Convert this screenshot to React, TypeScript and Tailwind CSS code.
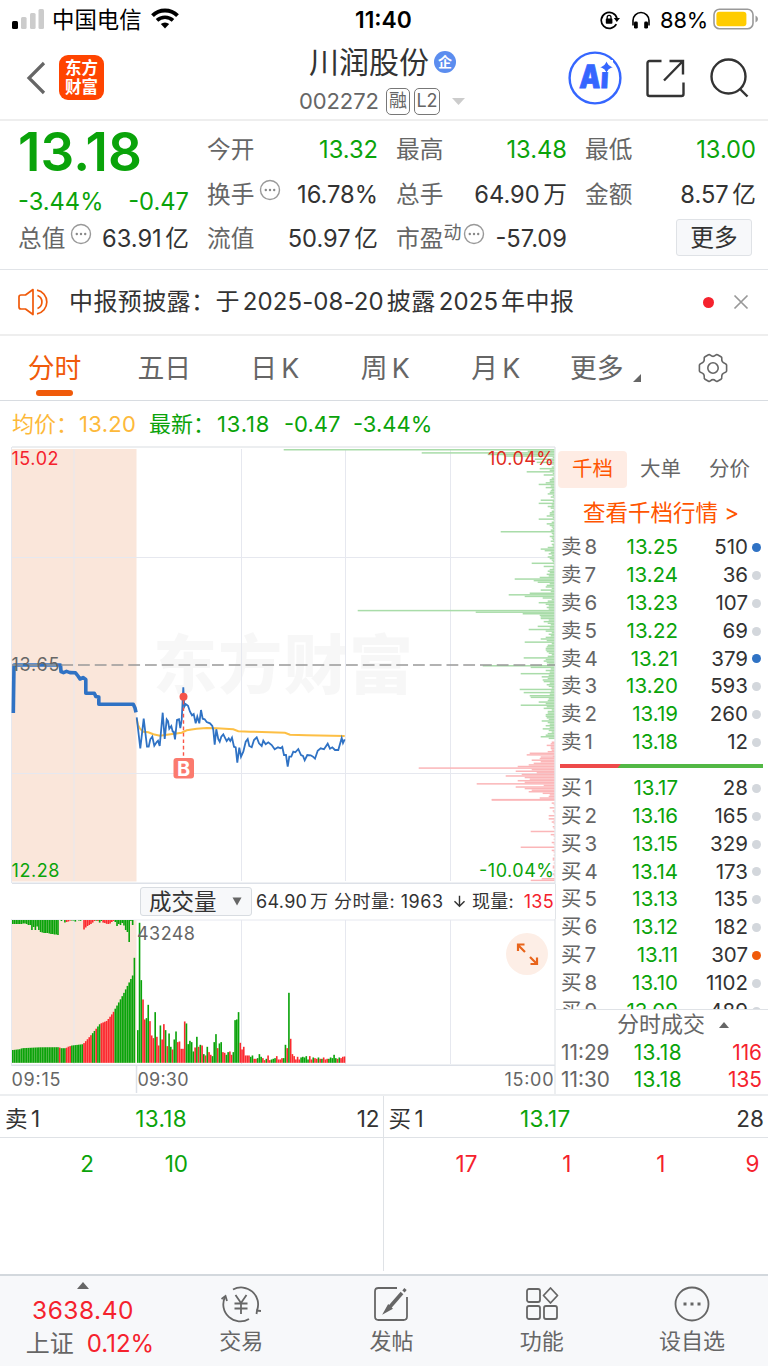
import React from 'react';
import { RiArrowDownLine } from 'react-icons/ri';

const UP = '#f5222d';
const DOWN = '#0aa30a';

// [page y, bar length] of the notable order book levels
const askLevels: [number, number][] = [
  [449.3, 271], [450.8, 27], [452.6, 133], [454, 67], [455.2, 50], [459, 20], [462, 18], [468.3, 15],
  [471.3, 28], [474.6, 11], [479.3, 5], [482.3, 9], [484, 16], [487.3, 9], [491, 4], [493.3, 7],
  [499.6, 14], [502.6, 16], [506, 7], [512, 5], [515.3, 8], [518.6, 16], [523.3, 8], [531, 54],
  [547.3, 7], [548.6, 14], [550, 10], [553.3, 6], [556.6, 7], [563, 23], [566.3, 11], [571.6, 7],
  [577, 15], [578.6, 40], [580, 21], [581.6, 17], [586.6, 9], [590, 14], [593, 25], [594.6, 46],
  [596, 30], [597.6, 12], [602.3, 16], [605.6, 6], [610.3, 197], [612, 79], [613.3, 32], [614.6, 15],
  [616.6, 14], [618.6, 14], [620.6, 11], [626, 17], [629.3, 26], [630.6, 9], [634, 6], [639, 14],
  [641.6, 30], [646, 8], [649.6, 9], [657.6, 31], [660.3, 11], [665.7, 72], [667.3, 24], [673.3, 34],
  [676.6, 13], [679.3, 12], [681.3, 11], [689, 35], [692.3, 31], [695.3, 25], [697, 24], [699.3, 6],
  [701.6, 16], [705, 34], [707.6, 11], [712.6, 7], [716.3, 9], [720.6, 13], [724, 5], [728.6, 12],
  [735.3, 9], [736.6, 14], [738, 6],
];

const bidLevels: [number, number][] = [
  [742.3, 3], [744.6, 8], [747, 4], [750.6, 7], [752.3, 25], [755.3, 28], [758.3, 15], [760, 23],
  [763.3, 21], [765, 26], [766.3, 37], [768, 136], [769.6, 23], [771.3, 39], [774.3, 33], [776, 49],
  [777.6, 30], [779.3, 25], [780.6, 37], [782.3, 30], [784, 78], [785.6, 11], [787, 39], [788.6, 30],
  [790.3, 23], [792, 26], [795, 5], [796.6, 6], [798.3, 15], [799.6, 63], [802.6, 3], [807.6, 5],
  [815.3, 6], [818.6, 6], [822, 3], [831.3, 24], [834.6, 4], [842.3, 3], [847, 34], [850.3, 3],
  [859.3, 2], [868, 2], [878.6, 13], [880, 24],
];

const TICK = 1.577;

// Every tick gets a bar, small ones come from a fixed pattern
function buildDepth(levels: [number, number][], from: number, to: number, filler: number[]) {
  const bars: { y: number; w: number }[] = [];
  for (let i = 0, y = from; y < to; i++, y += TICK) {
    const hit = levels.filter((l) => Math.abs(l[0] - y - 0.4) <= TICK / 2);
    const w = hit.length ? Math.max(...hit.map((h) => h[1])) : filler[i % filler.length];
    bars.push({ y, w });
  }
  return bars;
}

const askBars = [
  ...buildDepth(askLevels, 449, 572, [3, 2, 4, 1, 3, 2, 5]),
  ...buildDepth(askLevels, 572, 739, [5, 8, 6, 3, 7, 4, 9]),
];
const bidBars = [
  ...buildDepth(bidLevels, 741.5, 756, [2, 4, 3]),
  ...buildDepth(bidLevels, 756.3, 799, [14, 18, 12]),
  ...buildDepth(bidLevels, 799.2, 881, [1, 0, 2, 1, 0]),
];

const preLine =
  '13.3,713 14,665 60.5,665 61,671.5 63.5,672.6 66.5,671.4 70,672.6 75.5,672.8 78,676 80,679 83,677.6 85.8,679.5 85.8,693.3 94.3,693.3 95.8,696.4 98.8,697 98.8,704.3 133.3,704.3 135,708 136,712.3';

const mainPoints = [
  410, 232, 421, 325, 431, 236, 441, 320, 446, 320, 451, 298, 457, 290, 463, 317, 470, 306, 474, 302, 479, 318,
  488, 218, 494, 297, 500, 238, 504, 243, 508, 266, 514, 258, 518, 275, 521, 275, 525, 298, 531, 240, 537, 238,
  541, 264, 545, 240, 550, 142, 553, 200, 557, 192, 564, 197, 570, 215, 576, 226, 581, 222, 587, 250, 592, 230,
  598, 250, 603, 210, 608, 236, 614, 238, 620, 246, 630, 250, 637, 258, 640, 270, 644, 314, 649, 268, 655, 298,
  659, 305, 664, 290, 670, 283, 676, 295, 680, 303, 686, 295, 691, 303, 696, 293, 702, 320, 707, 322, 712, 368,
  718, 323, 723, 350, 730, 335, 737, 305, 743, 297, 748, 318, 755, 322, 762, 300, 770, 292, 777, 310, 785, 318,
  790, 302, 797, 313, 805, 307, 815, 315, 824, 328, 834, 322, 842, 325, 847, 321, 852, 345, 858, 345, 863, 380,
  868, 350, 874, 350, 880, 335, 886, 337, 895, 327, 903, 345, 909, 348, 914, 361, 922, 345, 932, 346, 939, 350,
  945, 356, 953, 332, 962, 325, 972, 328, 983, 311, 990, 326, 997, 322, 1005, 330, 1015, 330, 1025, 294, 1029, 309,
  1034, 298,
];

const avgPoints = [
  410, 236, 414, 255, 420, 266, 430, 275, 445, 277, 460, 283, 480, 287, 500, 284, 545, 278, 560, 271, 590, 266,
  620, 264, 650, 265, 700, 268, 715, 274, 750, 275, 855, 278, 870, 284, 920, 286, 1034, 288,
];

function toPoints(flat: number[]) {
  const out: string[] = [];
  for (let i = 0; i < flat.length; i += 2) {
    out.push(`${(flat[i] / 3).toFixed(1)},${(640 + flat[i + 1] / 3).toFixed(1)}`);
  }
  return out.join(' ');
}

// Call auction: matched volume envelope [x, height]
const auctionShape: [number, number][] = [
  [12, 12.7], [20, 13.6], [22, 14.6], [40, 15.5], [59, 15.6], [61, 14.6], [66, 14.6], [68, 16], [72, 17.3],
  [83, 18.6], [87, 23], [93, 30], [100, 39], [107, 42], [113, 50], [118, 59], [123, 68], [127, 76], [130, 82],
  [133, 88], [133.6, 105], [136, 105],
];
const auctionReds: [number, number][] = [[58.6, 60.5], [65.5, 71], [83, 92], [95.6, 97.5], [101, 114.6]];

function auctionHeight(x: number) {
  for (let i = 1; i < auctionShape.length; i++) {
    const [x0, h0] = auctionShape[i - 1];
    const [x1, h1] = auctionShape[i];
    if (x <= x1) return h0 + ((h1 - h0) * (x - x0)) / (x1 - x0);
  }
  return 0;
}

const BAR_STEP = 1.737;

const auctionBars = Array.from({ length: 71 }, (_, i) => {
  const x = 12 + i * BAR_STEP;
  const red = auctionReds.some(([a, b]) => x + 0.8 >= a && x + 0.8 < b);
  return { x, h: auctionHeight(x + 0.8), red };
});

// Unmatched volume hanging from the top, depth + colour
const unmatched = (
  '4g 4g 4g 4g 4g 4g 3.5g 3.5g 4g 5g 5g 10g 7g 10g 6.5g 10g 12g 12.5g 13g 13g 13g 13.5g 14g 14g 14.5g 14.5g 15g ' +
  '0g 1g 0g 2.5g 2r 1.5r 0.6r 0.5g 0.5g 1.6g 0g 0.5g 0.8g 0g 9.5r 7.5r 6r 5r 4r 2.6r 1r 0.7g 1r 2.6g 1g 2.6r 3r 3.8r 4r ' +
  '3.5r 2r 1r 2g 6g 4g 5g 3g 5.5g 10g 12g 22g 1g 5g 0g'
).split(' ');

const volumes = (
  '98g 420g 248g 190r 130r 134g 174g 125r 82r 74r 152g 78r 52r 112g 70r 116r 98g 50r 88g 48g 40r 70g 94g 62r 64r 42r 42r ' +
  '124r 118g 56g 66g 62g 34g 46r 78g 48r 54g 52r 26g 22r 48g 32r 24r 20g 62g 86g 44r 58g 62g 32r 30r 24g 32g 34r 24r 32g ' +
  '128g 130g 152g 60r 40r 48r 22r 22r 22r 18g 22g 12r 12r 14g 26g 18g 14r 8r 12g 22r 8r 10g 12g 14g 20r 10r 10r 14r 14g 54g 44r ' +
  '210g 72r 26r 20r 10r 18r 10r 16g 18g 16g 20g 10g 20r 10r 16g 14r 12r 16g 12r 12g 16r 10r 12r 12g 16g 14g 24g ' +
  '14g 12r 16g 14r 18r 19r'
)
  .split(' ')
  .slice(0, 121);

const asks = [
  ['卖8', '13.25', '510', 'blue'], ['卖7', '13.24', '36', ''], ['卖6', '13.23', '107', ''], ['卖5', '13.22', '69', ''],
  ['卖4', '13.21', '379', 'blue'], ['卖3', '13.20', '593', ''], ['卖2', '13.19', '260', ''], ['卖1', '13.18', '12', ''],
];
const bids = [
  ['买1', '13.17', '28', ''], ['买2', '13.16', '165', ''], ['买3', '13.15', '329', ''], ['买4', '13.14', '173', ''],
  ['买5', '13.13', '135', ''], ['买6', '13.12', '182', ''], ['买7', '13.11', '307', 'orange'], ['买8', '13.10', '1102', ''],
  ['买9', '13.09', '489', ''],
];

// Small gap where Han characters meet digits or latin letters
function Spaced({ text }: { text: string }) {
  const parts = text.match(/[\u4e00-\u9fff]+|[^\u4e00-\u9fff]+/g) || [];
  return (
    <>
      {parts.map((p, i) => (
        <span key={i} className={i > 0 ? 'ml-[0.15em]' : ''}>
          {p}
        </span>
      ))}
    </>
  );
}

function InfoDot() {
  return (
    <svg width="22" height="22" viewBox="0 0 22 22" className="shrink-0">
      <circle cx="11" cy="11" r="9.5" fill="none" stroke="#999" strokeWidth="1.4" />
      <circle cx="6.8" cy="11" r="1.2" fill="#888" />
      <circle cx="11" cy="11" r="1.2" fill="#888" />
      <circle cx="15.2" cy="11" r="1.2" fill="#888" />
    </svg>
  );
}

function StatusBar() {
  return (
    <div className="flex h-10 items-center text-black">
      <svg width="32" height="20" viewBox="0 0 32 20" className="-mt-0.5 ml-3">
        <rect x="0" y="12" width="6" height="8" rx="1.5" fill="#000" />
        <rect x="9" y="8" width="5.6" height="12" rx="1.5" fill="#ccc" />
        <rect x="18" y="4" width="5.6" height="16" rx="1.5" fill="#ccc" />
        <rect x="26.5" y="0" width="5.5" height="20" rx="1.5" fill="#ccc" />
      </svg>
      <span className="ml-2 w-[89px] text-[22.4px] whitespace-nowrap">中国电信</span>
      <svg width="28" height="21" viewBox="0 0 28 21" className="-mt-1 ml-2.5">
        <path d="M1.5 7.6a18 18 0 0 1 25 0" fill="none" stroke="#000" strokeWidth="4" />
        <path d="M6 12.4a11.6 11.6 0 0 1 16 0" fill="none" stroke="#000" strokeWidth="3.6" />
        <path d="M14 20.5l-4.2-4.4a6.2 6.2 0 0 1 8.4 0z" fill="#000" />
      </svg>
      <span className="ml-[176px] w-[59px] text-[22.800px] font-semibold">11:40</span>
      <svg width="20" height="20" viewBox="0 0 20 20" className="ml-[186px]">
        <path d="M16.3 14.2A8 8 0 1 1 17 8.5" fill="none" stroke="#000" strokeWidth="1.7" />
        <path d="M13.8 8h6.2l-3.2 4z" fill="#000" />
        <rect x="5.8" y="8.6" width="6.6" height="5.2" rx="0.8" fill="#000" />
        <path d="M7.2 9V7.2a1.9 1.9 0 0 1 3.8 0V9" fill="none" stroke="#000" strokeWidth="1.3" />
      </svg>
      <svg width="20" height="19" viewBox="0 0 20 19" className="ml-[11px]">
        <path d="M2 14.5V9.5a8 8 0 0 1 16 0v5" fill="none" stroke="#000" strokeWidth="1.6" />
        <rect x="3" y="10.6" width="3.8" height="7" rx="1.4" fill="#000" />
        <rect x="13.2" y="10.6" width="3.8" height="7" rx="1.4" fill="#000" />
      </svg>
      <span className="ml-[9px] w-[48px] text-[21.800px] tracking-[-0.1px]">88%</span>
      <svg width="46" height="22" viewBox="0 0 46 22" className="-mt-0.5 ml-[5px]">
        <rect x="1" y="1.2" width="39" height="19.6" rx="5.5" fill="none" stroke="#999" strokeWidth="1.6" />
        <rect x="3.4" y="3.8" width="30" height="14.4" rx="3" fill="#fc0" />
        <path d="M42.5 7.5q2.5 1 2.5 3.5t-2.5 3.5z" fill="#999" />
      </svg>
    </div>
  );
}

function Header() {
  return (
    <header className="flex h-[81px] border-b-2 border-[#eeeeee]">
      <svg width="20" height="34" viewBox="0 0 20 34" className="mt-[21px] ml-[26px]">
        <path d="M18 2L3 17l15 15" fill="none" stroke="#666" strokeWidth="3.2" />
      </svg>
      <div className="mt-[15px] ml-[13px] flex h-[45px] w-[45px] flex-col items-center justify-center rounded-[9px] bg-[#ff4400] text-[16.5px] leading-[18.5px] font-bold text-white">
        <span>东方</span>
        <span>财富</span>
      </div>
      <div className="ml-[195px] flex w-[169px] flex-col">
        <div className="mt-[2px] flex h-10 items-center">
          <span className="ml-[10px] text-[30px] whitespace-nowrap text-[#333]">川润股份</span>
          <span className="ml-[5px] flex h-[22px] w-[22px] shrink-0 items-center justify-center rounded-full bg-[#5b8def] text-[14px] leading-none font-bold text-white">
            企
          </span>
        </div>
        <div className="mt-[5px] flex h-7 items-center text-[#666]">
          <span className="w-[83px] text-[22px] tracking-[-0.1px]">002272</span>
          <span className="ml-[4px] flex h-[27px] w-6 shrink-0 items-center justify-center rounded-[5px] border border-[#777] text-[18px] leading-none">
            融
          </span>
          <span className="ml-1 flex h-[27px] w-[26px] shrink-0 items-center justify-center rounded-[5px] border border-[#777] text-[18px] leading-none">
            L2
          </span>
          <svg width="13" height="7" viewBox="0 0 13 7" className="ml-3 shrink-0">
            <path d="M0 0h13L6.500 7z" fill="#ccc" />
          </svg>
        </div>
      </div>
      <svg width="54" height="54" viewBox="0 0 54 54" className="mt-[11px] ml-[100px]">
        <circle cx="27" cy="27" r="25.400" fill="#fff" stroke="#3566ff" strokeWidth="2.400" />
        <text
          x="13"
          y="37.500"
          transform="skewX(-3)"
          fontSize="32"
          fontWeight="900"
          fill="#3566ff"
          stroke="#3566ff"
          strokeWidth="0.800"
          textLength="29"
          lengthAdjust="spacingAndGlyphs"
        >
          Ai
        </text>
        <rect x="31" y="9" width="14" height="12" fill="#fff" />
        <path d="M38.500 12q1.200 3 4.500 4.200q-3.300 1.200-4.500 4.200q-1.200-3-4.500-4.200q3.300-1.200 4.500-4.200z" fill="#3566ff" stroke="#3566ff" strokeWidth="1.200" />
      </svg>
      <svg width="40" height="40" viewBox="0 0 40 40" fill="none" stroke="#333" strokeWidth="2.400" className="mt-[18px] ml-[23px]">
        <path d="M16.500 3H4.500a2 2 0 0 0-2 2v31a2 2 0 0 0 2 2h32a2 2 0 0 0 2-2V24.500" />
        <path d="M24.500 3h13.500v13.500M37.500 3.500L19 22.500" />
      </svg>
      <svg width="40" height="40" viewBox="0 0 40 40" fill="none" stroke="#333" strokeWidth="2.400" className="mt-[18px] ml-[24px]">
        <circle cx="19.500" cy="18.500" r="17" />
        <path d="M30.500 30.500l8 8" />
      </svg>
    </header>
  );
}

type CellProps = { label: string; value: string; green?: boolean; info?: boolean; sup?: string };

function Cell({ label, value, green, info, sup }: CellProps) {
  return (
    <div className="flex h-[44.5px] items-center justify-between whitespace-nowrap">
      <div className="flex items-center text-[#666]">
        <span>{label}</span>
        {sup && <span className="-mt-3.5 text-[18px]">{sup}</span>}
        {info && (
          <span className={sup ? '-mt-2.5 ml-0.5' : '-mt-2.5 ml-[5px]'}>
            <InfoDot />
          </span>
        )}
      </div>
      <span className={green ? 'text-[#0aa30a]' : 'text-[#333]'}>
        <Spaced text={value} />
      </span>
    </div>
  );
}

function Quote() {
  return (
    <section className="flex h-[149px] gap-[18px] border-b border-[#e1e4e8] pt-[7px] pl-[18px] text-[23.700px]">
      <div className="w-[171px]">
        <div className="h-[52px] text-[53px] leading-[49px] font-semibold tracking-[0.100px] text-[#0aa30a]">13.18</div>
        <div className="flex h-[37px] items-center justify-between pt-[6px] text-[#0aa30a]">
          <span>-3.44%</span>
          <span>-0.47</span>
        </div>
        <Cell label="总值" value="63.91亿" info />
      </div>
      <div className="w-[171px]">
        <Cell label="今开" value="13.32" green />
        <Cell label="换手" value="16.78%" info />
        <Cell label="流值" value="50.97亿" />
      </div>
      <div className="w-[171px]">
        <Cell label="最高" value="13.48" green />
        <Cell label="总手" value="64.90万" />
        <Cell label="市盈" value="-57.09" info sup="动" />
      </div>
      <div className="w-[171px]">
        <Cell label="最低" value="13.00" green />
        <Cell label="金额" value="8.57亿" />
        <button className="mt-0.5 ml-[91px] flex h-[37px] w-[76px] items-center justify-center rounded-[3px] border border-[#dfe2e6] bg-[#f7f8fa] text-[#333]">
          更多
        </button>
      </div>
    </section>
  );
}

function Notice() {
  return (
    <section className="flex h-[66px] items-center border-b-2 border-[#eeeeee] pl-[18px]">
      <svg width="32" height="28" viewBox="0 0 32 28" fill="none" stroke="#f05a0a" strokeWidth="1.700">
        <path d="M15 1.500L7.500 7H3Q1 7 1 9v10q0 2 2 2h4.500L15 26.500z" strokeLinejoin="round" />
        <path d="M19.500 7.500a7 7 0 0 1 0 13M19 2.200a12 12 0 0 1 0 23.600" />
      </svg>
      <span className="ml-[19px] w-[507px] text-[24px] tracking-[0.400px] whitespace-nowrap text-[#333]">
        中报预披露：于
        <span className="mx-[3px] tracking-[0.100px]">2025-08-20</span>
        披露
        <span className="mx-[3px] tracking-[0.100px]">2025</span>
        年中报
      </span>
      <span className="ml-[127px] h-[11px] w-[11px] shrink-0 rounded-full bg-[#f5222d]" />
      <svg width="16" height="16" viewBox="0 0 16 16" className="ml-[19px] shrink-0">
        <path d="M1.500 1.500l13 13M14.500 1.500l-13 13" stroke="#999" strokeWidth="1.700" />
      </svg>
    </section>
  );
}

function PeriodTabs() {
  const tabs = ['五日', '日K', '周K', '月K'];
  return (
    <nav className="flex h-[65px] border-b-[1.500px] border-[#d8dce1] text-[26.800px] text-[#666]">
      <div className="mr-[27px] ml-[27px] flex w-[55px] flex-col items-center">
        <span className="mt-[5px] h-[52px] leading-[54px] whitespace-nowrap text-[#f05a0a]">分时</span>
        <span className="-mt-[3px] h-[6px] w-[37px] rounded-full bg-[#f05a0a]" />
      </div>
      {tabs.map((t) => (
        <div key={t} className="mt-[5px] flex w-[110.500px] justify-center leading-[54px] whitespace-nowrap">
          <Spaced text={t} />
        </div>
      ))}
      <div className="mt-[5px] ml-[19px] flex leading-[54px]">
        <span className="whitespace-nowrap">更多</span>
        <svg width="8" height="8" viewBox="0 0 8 8" className="mt-[33px] ml-[9px]">
          <path d="M8 0v8H0z" fill="#666" />
        </svg>
      </div>
      <svg width="30" height="30" viewBox="0 0 30 30" fill="none" stroke="#666" strokeWidth="1.600" className="mt-[17px] ml-[57px]">
        <circle cx="15" cy="15" r="5.200" />
        <path
          d="M10.500 1.800Q11.500 1.200 12.400 2.200Q15 4.600 17.600 2.200Q18.500 1.200 19.500 1.800L23 3.800Q24 4.400 23.800 5.600Q23.300 9.200 27 10.400Q28.200 10.800 28.600 12V18Q28.200 19.200 27 19.600Q23.300 20.800 23.800 24.400Q24 25.600 23 26.200L19.500 28.200Q18.500 28.800 17.600 27.800Q15 25.400 12.400 27.800Q11.500 28.800 10.500 28.200L7 26.200Q6 25.600 6.200 24.400Q6.700 20.800 3 19.600Q1.800 19.200 1.400 18V12Q1.800 10.800 3 10.400Q6.700 9.200 6.200 5.600Q6 4.400 7 3.800Z"
          strokeLinejoin="round"
        />
      </svg>
    </nav>
  );
}

function PriceChart() {
  return (
    <svg width="556" height="438" viewBox="0 446 556 438" className="block" fontSize="18">
      <rect x="12" y="449" width="124.500" height="432.500" fill="#fae6da" />
      <text x="153" y="688" fontSize="64" fontWeight="900" fill="#000" fillOpacity="0.030" textLength="260">
        东方财富
      </text>
      <g stroke="#e6e8ef" strokeWidth="1">
        <path d="M12 557.500H555M12 773.500H555" />
        <path d="M74 449V881M241.500 449V881M345.500 449V881M450.500 449V881" />
        <path d="M11.500 447V883" />
      </g>
      <path d="M12 447H555" stroke="#eceef0" strokeWidth="2" />
      <path d="M12 883.200H555" stroke="#dde1e8" strokeWidth="1.600" />
      {askBars.map((b, i) => (
        <rect key={i} x={554.7 - b.w} y={b.y} width={b.w} height="1.500" fill="#a9dca9" />
      ))}
      {bidBars.map((b, i) => (
        <rect key={i} x={554.7 - b.w} y={b.y} width={b.w} height="1.500" fill="#fbb6b8" />
      ))}
      <path d="M555 447V884" stroke="#e1e4e8" strokeWidth="1.200" />
      <polyline points={toPoints(avgPoints)} fill="none" stroke="#fdbf45" strokeWidth="2" />
      <polyline points={preLine} fill="none" stroke="#2f72c4" strokeWidth="3.600" strokeLinejoin="round" />
      <polyline points={toPoints(mainPoints)} fill="none" stroke="#2f72c4" strokeWidth="1.800" />
      <path d="M12 665H555" stroke="#999" strokeWidth="1.500" strokeDasharray="11.800 4.950" strokeDashoffset="1" />
      <path d="M183.500 701V757" stroke="#fa5548" strokeWidth="1.400" strokeDasharray="3.600 2.800" />
      <circle cx="183.500" cy="696.800" r="4" fill="#f4534a" />
      <rect x="173.500" y="758" width="20.500" height="20.500" rx="3" fill="#fb7a6e" />
      <text x="183.700" y="775.500" fontSize="20" fontWeight="700" fill="#fff" textAnchor="middle">B</text>
      <text x="11.500" y="465" fill={UP} textLength="47">15.02</text>
      <text x="11.500" y="670.500" fill="#666" textLength="48">13.65</text>
      <text x="11.500" y="876.500" fill={DOWN} textLength="48">12.28</text>
      <text x="488" y="465" fill="#e02a20" textLength="66">10.04%</text>
      <text x="479" y="876.500" fill={DOWN} textLength="75">-10.04%</text>
    </svg>
  );
}

function VolumeChart() {
  return (
    <svg width="556" height="175" viewBox="0 919 556 175" className="block" fontSize="18">
      <rect x="12" y="920" width="124.500" height="143" fill="#fae6da" />
      <g stroke="#e6e8ef" strokeWidth="1">
        <path d="M12 920H555" />
        <path d="M74 920V1064M241.500 920V1064M345.500 920V1064M450.500 920V1064M11.500 919V1066" />
      </g>
      {auctionBars.map((b, i) => (
        <rect key={i} x={b.x} y={1062.800 - b.h} width="1.620" height={b.h} fill={b.red ? '#fb2a2f' : DOWN} />
      ))}
      {unmatched.map((u, i) => (
        <rect key={i} x={12 + i * BAR_STEP} y="920" width="1.620" height={parseFloat(u)} fill={u.endsWith('r') ? '#fb2a2f' : DOWN} />
      ))}
      {volumes.map((v, i) => (
        <rect
          key={i}
          x={137 + i * BAR_STEP}
          y={1062.800 - parseInt(v) / 3}
          width="1.620"
          height={parseInt(v) / 3}
          fill={v.endsWith('r') ? '#fb2a2f' : DOWN}
        />
      ))}
      <path d="M12 1065.300H555M136.500 1065V1093" stroke="#dde1e8" strokeWidth="1.500" />
      <path d="M555 919V1094" stroke="#e1e4e8" strokeWidth="1.200" />
      <g fill="#666">
        <text x="137" y="940" textLength="58">43248</text>
        <text x="11.500" y="1086" textLength="49">09:15</text>
        <text x="137.500" y="1086" textLength="51">09:30</text>
        <text x="504.500" y="1086" textLength="49">15:00</text>
      </g>
      <circle cx="527" cy="954" r="21" fill="#fdeee6" />
      <path
        d="M525 952l-7-7M518 951v-6.500h6.500M530 957l7 7M537 957.500v6.500h-6.500"
        fill="none"
        stroke="#e8641b"
        strokeWidth="2.200"
      />
    </svg>
  );
}

function IndicatorRow() {
  return (
    <div className="flex h-[35px] items-center border-r border-[#e1e4e8] text-[18px] tracking-[0.300px] whitespace-nowrap text-[#333]">
      <div className="ml-[140px] flex h-[29px] w-[112px] shrink-0 items-center rounded-[3px] border border-[#d8dce1] bg-[#f7f8fa] pl-2 text-[22.500px] tracking-normal">
        成交量
        <svg width="10" height="9" viewBox="0 0 10 9" className="ml-[15px]">
          <path d="M0.500 0.500h9L5 8.500z" fill="#666" />
        </svg>
      </div>
      <span className="ml-1 w-[74px]">
        <Spaced text="64.90万" />
      </span>
      <span className="ml-[4px] w-[117px] tracking-[0.500px]">分时量: 1963</span>
      <RiArrowDownLine size={17} className="shrink-0" />
      <span className="ml-[4px]">现量:</span>
      <span className="mr-px ml-auto text-[#f5222d]">135</span>
    </div>
  );
}

function BookRow({ row }: { row: string[] }) {
  const dot = row[3] === 'blue' ? 'bg-[#2f72c4]' : row[3] === 'orange' ? 'bg-[#f05a0a]' : 'bg-[#d3d7dc]';
  return (
    <div className="flex h-[27.860px] shrink-0 items-center text-[20.500px]">
      <span className="w-[52px] text-[#666]">
        <Spaced text={row[0]} />
      </span>
      <span className="w-[65px] text-right text-[#0aa30a]">{row[1]}</span>
      <span className="w-[70px] text-right text-[#333]">{row[2]}</span>
      <span className={`ml-[4px] h-[9px] w-[9px] rounded-full ${dot}`} />
    </div>
  );
}

function OrderBook() {
  return (
    <aside className="flex h-[648px] w-[212px] flex-col">
      <div className="mt-[5px] flex h-[37px] items-center text-[20.500px] text-[#666]">
        <span className="ml-[2px] flex h-[37px] w-[69px] items-center justify-center rounded-[4px] bg-[#feece4] text-[#ff5500]">
          千档
        </span>
        <span className="ml-[13px]">大单</span>
        <span className="ml-[28px]">分价</span>
      </div>
      <div className="mt-[8px] h-[35px] pl-[27px] text-[22.500px] leading-[33px] whitespace-nowrap text-[#ff5500]">
        查看千档行情 &gt;
      </div>
      <div className="mt-[2px] flex h-[477px] flex-col overflow-hidden border-b border-[#dfe2e6] pt-[0.600px] pl-[5px]">
        {asks.map((r) => (
          <BookRow key={r[0]} row={r} />
        ))}
        <div className="-ml-px mt-[7.400px] mb-[6px] flex h-[4.500px] w-[203px] shrink-0 bg-[#52b845]">
          <span className="w-[61px] bg-[#ee4a4a] [clip-path:polygon(0_0,100%_0,94%_100%,0_100%)]" />
        </div>
        {bids.map((r) => (
          <BookRow key={r[0]} row={r} />
        ))}
      </div>
      <div className="flex h-[29px] items-center pl-[61px] text-[22px] whitespace-nowrap text-[#666]">
        分时成交
        <svg width="10" height="6" viewBox="0 0 10 6" className="ml-[14px]">
          <path d="M0 6h10L5 0z" fill="#666" />
        </svg>
      </div>
      {[['11:29', '13.18', '116'], ['11:30', '13.18', '135']].map((t) => (
        <div key={t[0]} className="flex h-[27px] shrink-0 items-center pl-[5px] text-[20.800px]">
          <span className="w-[55px] text-[#666]">{t[0]}</span>
          <span className="w-[66px] text-right tracking-[0.400px] text-[#0aa30a]">{t[1]}</span>
          <span className="w-[80px] text-right text-[#f5222d]">{t[2]}</span>
        </div>
      ))}
    </aside>
  );
}

function QueuePanel() {
  return (
    <section className="flex h-[180px] border-t-2 border-[#eceef0] pb-[3px] text-[22.500px]">
      <div className="w-[383.500px] border-r-[1.500px] border-[#dfe2e6]">
        <div className="flex h-[42px] items-center border-b border-[#dfe2e6] pt-[4px] text-[#333]">
          <span className="ml-[5px] w-[80px]">
            <Spaced text="卖1" />
          </span>
          <span className="w-[102px] text-right tracking-[0.300px] text-[#0aa30a]">13.18</span>
          <span className="ml-auto pr-[3px]">12</span>
        </div>
        <div className="flex h-[50px] items-center pt-px text-[#0aa30a]">
          <span className="w-[94px] text-right">2</span>
          <span className="w-[94px] text-right">10</span>
        </div>
      </div>
      <div className="flex-1">
        <div className="flex h-[42px] items-center border-b border-[#dfe2e6] pt-[4px] text-[#333]">
          <span className="ml-[5px] w-[80px]">
            <Spaced text="买1" />
          </span>
          <span className="w-[102px] text-right tracking-[0.300px] text-[#0aa30a]">13.17</span>
          <span className="ml-auto pr-[4px]">28</span>
        </div>
        <div className="flex h-[50px] items-center pt-px text-[#f5222d]">
          <span className="w-[94px] text-right">17</span>
          <span className="w-[94px] text-right">1</span>
          <span className="w-[94px] text-right">1</span>
          <span className="w-[94px] text-right">9</span>
        </div>
      </div>
    </section>
  );
}

function NavItem({ label, children }: { label: string; children: React.ReactNode }) {
  return (
    <div className="flex w-[150.300px] flex-col items-center">
      <svg width="40" height="40" viewBox="0 0 40 40" fill="none" stroke="#666" strokeWidth="1.800" className="mt-[8px]">
        {children}
      </svg>
      <span className="mt-px text-[22px] leading-[32px] whitespace-nowrap">{label}</span>
    </div>
  );
}

function BottomNav() {
  return (
    <footer className="flex h-[92px] border-t-2 border-[#d3d8dd] bg-[#f7f8fa] text-[#666]">
      <div className="flex w-[166px] flex-col items-center">
        <svg width="12" height="7" viewBox="0 0 12 7" className="mt-[6px]">
          <path d="M0 7h12L6 0z" fill="#666" />
        </svg>
        <span className="mt-[5px] text-[24.500px] leading-[32px] tracking-[0.500px] text-[#f5222d]">3638.40</span>
        <div className="mt-px ml-[14px] flex text-[24px] leading-[34px] whitespace-nowrap">
          上证<span className="ml-[13px] text-[#f5222d]">0.12%</span>
        </div>
      </div>
      <NavItem label="交易">
        <path d="M12 5.500A17 17 0 0 1 36 26.500M28 35A17 17 0 0 1 4 13" />
        <path d="M0.500 15l4-3 1.500 5M40 27l-4-.500-.500 3.500" />
        <path d="M14.500 11l5.500 8 5.500-8M13.500 19.500h13M13.500 24.500h13M20 19v11" />
      </NavItem>
      <NavItem label="发帖">
        <path d="M26 4H7.500Q4 4 4 7.500v25Q4 36 7.500 36h25Q36 36 36 32.500V13" />
        <path d="M17.500 24.500L31 9" strokeWidth="3.600" />
        <path d="M15 27l2.500-4.500 2 2zM32.500 7.500l2-2.500" strokeWidth="3" />
      </NavItem>
      <NavItem label="功能">
        <rect x="5" y="5" width="13" height="13" rx="2" />
        <rect x="5" y="22" width="13" height="13" rx="2" />
        <rect x="22" y="22" width="13" height="13" rx="2" />
        <path d="M28.500 4l7 7.500-7 7.500-7-7.500z" strokeLinejoin="round" />
      </NavItem>
      <NavItem label="设自选">
        <circle cx="20" cy="20" r="16.500" />
        <path d="M11.500 20h3M18.500 20h3M25.500 20h3" strokeWidth="3" />
      </NavItem>
    </footer>
  );
}

export default function App() {
  return (
    <div className="h-[1366px] w-[768px] overflow-hidden bg-white font-['Inter','Noto_Sans_CJK_SC',sans-serif]">
      <StatusBar />
      <Header />
      <Quote />
      <Notice />
      <PeriodTabs />
      <div className="flex h-[45px] items-center pt-px pl-3 text-[22px] whitespace-nowrap">
        <span className="w-[137px] text-[#fdb93a]">
          均价：<span className="ml-px tracking-[0.300px]">13.20</span>
        </span>
        <span className="w-[68px] text-[#0aa30a]">最新：</span>
        <span className="w-[67px] tracking-[0.800px] text-[#0aa30a]">13.18</span>
        <span className="w-[69px] text-[#0aa30a]">-0.47</span>
        <span className="text-[#0aa30a]">-3.44%</span>
      </div>
      <div className="flex h-[648px]">
        <div className="w-[556px]">
          <PriceChart />
          <IndicatorRow />
          <VolumeChart />
        </div>
        <OrderBook />
      </div>
      <QueuePanel />
      <BottomNav />
    </div>
  );
}
